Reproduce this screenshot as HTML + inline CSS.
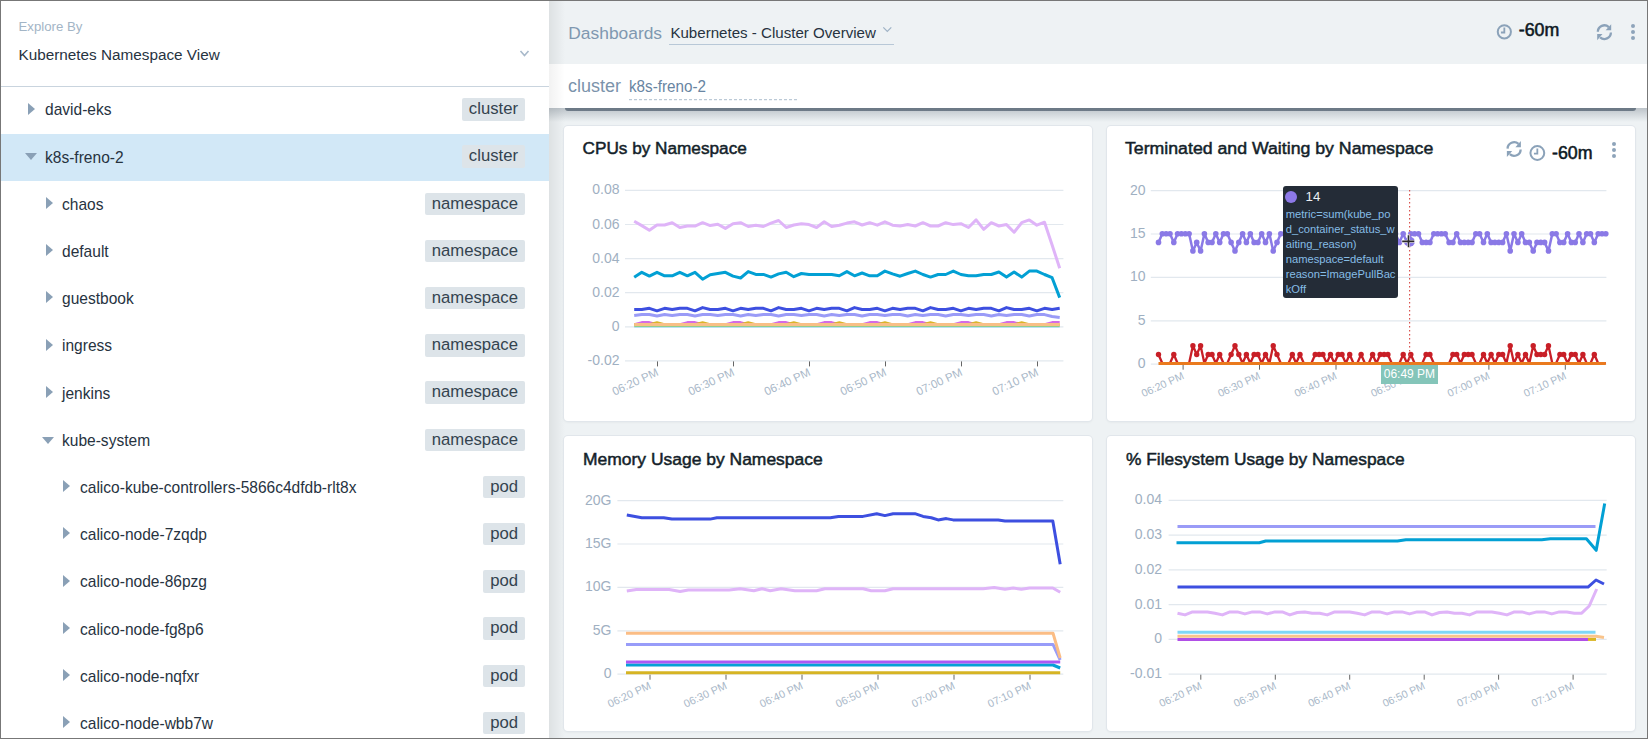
<!DOCTYPE html><html><head><meta charset="utf-8"><style>
*{box-sizing:border-box;margin:0;padding:0}
html,body{width:1648px;height:739px;overflow:hidden;background:#fff}
body{position:relative;font-family:"Liberation Sans", sans-serif;color:#2b3946}
.abs{position:absolute}
.frame{position:absolute;left:0;top:0;width:1648px;height:739px;border:1px solid #777;z-index:50;pointer-events:none}
.left{position:absolute;left:0;top:0;width:549px;height:739px;background:#fff}
.lbl{position:absolute;white-space:nowrap;line-height:1}
.row{position:absolute;left:0;width:549px;height:47.2px}
.row.sel{background:#d2e8f7}
.row .t{position:absolute;top:14.9px;font-size:16.2px;transform:scaleX(0.96);transform-origin:0 0;line-height:1;white-space:nowrap;color:#27333f}
.tag{position:absolute;right:24px;top:11.5px;height:22.6px;padding:0 7px;background:#dde4e9;border-radius:2px;font-size:16.7px;line-height:22.6px;color:#34434f}
.tri-r{position:absolute;width:0;height:0;border-top:6.8px solid transparent;border-bottom:6.8px solid transparent;border-left:7.3px solid #8aa0b6}
.tri-d{position:absolute;width:0;height:0;border-left:6.8px solid transparent;border-right:6.8px solid transparent;border-top:7.2px solid #8aa0b6}
.main{position:absolute;left:549px;top:0;width:1099px;height:739px;background:#eef2f4}
.card{position:absolute;background:#fff;border-radius:4px;box-shadow:0 0 0 1px #e1e6eb, 0 1px 3px rgba(0,0,0,.07)}
.ttl{position:absolute;left:18px;font-size:17.2px;font-weight:normal;-webkit-text-stroke:0.5px #141f2a;color:#141f2a;white-space:nowrap;line-height:1}
svg text{font-family:"Liberation Sans", sans-serif}
</style></head><body><div class="left">
<div class="lbl" style="left:18.5px;top:20.2px;font-size:13.2px;color:#a3b5c6">Explore By</div>
<div class="lbl" style="left:18.5px;top:47.4px;font-size:15.3px;color:#27333f">Kubernetes Namespace View</div>
<svg class="abs" style="left:519px;top:49px" width="12" height="9"><polyline points="1.5,2 5.5,6.5 9.5,2" fill="none" stroke="#a8b9ca" stroke-width="1.6"/></svg>
<div class="abs" style="left:1px;top:86px;width:548px;height:1px;background:#c9d4de"></div>
<div class="row" style="top:86.6px">
<div class="tri-r" style="left:28.0px;top:16.1px"></div>
<div class="t" style="left:44.6px">david-eks</div>
<div class="tag">cluster</div>
</div>
<div class="row sel" style="top:133.8px">
<div class="tri-d" style="left:24.8px;top:19.5px"></div>
<div class="t" style="left:44.6px">k8s-freno-2</div>
<div class="tag">cluster</div>
</div>
<div class="row" style="top:181.0px">
<div class="tri-r" style="left:45.6px;top:16.1px"></div>
<div class="t" style="left:62.2px">chaos</div>
<div class="tag">namespace</div>
</div>
<div class="row" style="top:228.2px">
<div class="tri-r" style="left:45.6px;top:16.1px"></div>
<div class="t" style="left:62.2px">default</div>
<div class="tag">namespace</div>
</div>
<div class="row" style="top:275.4px">
<div class="tri-r" style="left:45.6px;top:16.1px"></div>
<div class="t" style="left:62.2px">guestbook</div>
<div class="tag">namespace</div>
</div>
<div class="row" style="top:322.6px">
<div class="tri-r" style="left:45.6px;top:16.1px"></div>
<div class="t" style="left:62.2px">ingress</div>
<div class="tag">namespace</div>
</div>
<div class="row" style="top:369.8px">
<div class="tri-r" style="left:45.6px;top:16.1px"></div>
<div class="t" style="left:62.2px">jenkins</div>
<div class="tag">namespace</div>
</div>
<div class="row" style="top:417.0px">
<div class="tri-d" style="left:42.4px;top:19.5px"></div>
<div class="t" style="left:62.2px">kube-system</div>
<div class="tag">namespace</div>
</div>
<div class="row" style="top:464.2px">
<div class="tri-r" style="left:63.2px;top:16.1px"></div>
<div class="t" style="left:79.8px">calico-kube-controllers-5866c4dfdb-rlt8x</div>
<div class="tag">pod</div>
</div>
<div class="row" style="top:511.4px">
<div class="tri-r" style="left:63.2px;top:16.1px"></div>
<div class="t" style="left:79.8px">calico-node-7zqdp</div>
<div class="tag">pod</div>
</div>
<div class="row" style="top:558.6px">
<div class="tri-r" style="left:63.2px;top:16.1px"></div>
<div class="t" style="left:79.8px">calico-node-86pzg</div>
<div class="tag">pod</div>
</div>
<div class="row" style="top:605.8px">
<div class="tri-r" style="left:63.2px;top:16.1px"></div>
<div class="t" style="left:79.8px">calico-node-fg8p6</div>
<div class="tag">pod</div>
</div>
<div class="row" style="top:653.0px">
<div class="tri-r" style="left:63.2px;top:16.1px"></div>
<div class="t" style="left:79.8px">calico-node-nqfxr</div>
<div class="tag">pod</div>
</div>
<div class="row" style="top:700.2px">
<div class="tri-r" style="left:63.2px;top:16.1px"></div>
<div class="t" style="left:79.8px">calico-node-wbb7w</div>
<div class="tag">pod</div>
</div>
</div>
<div class="main">
<div class="abs" style="left:0;top:0;width:16px;height:739px;background:linear-gradient(to right,rgba(0,0,0,.07),rgba(0,0,0,0))"></div>
<div class="lbl" style="left:19.3px;top:25px;font-size:17.4px;color:#7f98b0">Dashboards</div>
<div class="lbl" style="left:121.4px;top:25.2px;font-size:15.1px;color:#27333f">Kubernetes - Cluster Overview</div>
<svg class="abs" style="left:333px;top:25px" width="11" height="9"><polyline points="1.3,2.3 5.3,6.5 9.3,2.3" fill="none" stroke="#9fb3c6" stroke-width="1.2"/></svg>
<div class="abs" style="left:120px;top:43.8px;width:225px;height:1.5px;background:#b8c8d7"></div>
<svg class="abs" style="left:945px;top:22px" width="22" height="22"><circle cx="10.34" cy="9.80" r="6.60" fill="none" stroke="#8ba2b9" stroke-width="2"/><polyline points="10.34,5.40 10.34,10.50 6.94,10.50" fill="none" stroke="#8ba2b9" stroke-width="1.8"/></svg>
<div class="lbl" style="left:969.8px;top:22.3px;font-size:17.8px;-webkit-text-stroke:0.55px #0d1823;color:#0d1823">-60m</div>
<svg class="abs" style="left:1045px;top:22px" width="20" height="20" viewBox="-0.47 -0.15 20 20"><path d="M3.35 9.6A6.55 6.55 0 0 1 14.3 4.9" fill="none" stroke="#8ba2b9" stroke-width="2.3"/><path d="M16.7 2.0V8.2H11.2Z" fill="#8ba2b9"/><path d="M16.45 10.4A6.55 6.55 0 0 1 5.6 15.2" fill="none" stroke="#8ba2b9" stroke-width="2.3"/><path d="M2.7 18.0V11.9H8.0Z" fill="#8ba2b9"/></svg>
<div class="abs" style="left:1081.7px;top:24.0px;width:4.4px;height:4.4px;border-radius:50%;background:#8ea4ba"></div><div class="abs" style="left:1081.7px;top:29.9px;width:4.4px;height:4.4px;border-radius:50%;background:#8ea4ba"></div><div class="abs" style="left:1081.7px;top:35.8px;width:4.4px;height:4.4px;border-radius:50%;background:#8ea4ba"></div>
<div class="abs" style="left:16px;top:108px;width:1071px;height:3px;background:#7d8995;border-radius:0 0 3px 3px"></div>
<div class="abs" style="left:0;top:108px;width:1099px;height:14px;background:linear-gradient(to bottom,rgba(60,75,90,.28),rgba(60,75,90,0))"></div>
<div class="abs" style="left:0;top:64px;width:1099px;height:44px;background:#fff"></div>
<div class="abs" style="left:0;top:64px;width:16px;height:44px;background:linear-gradient(to right,rgba(0,0,0,.05),rgba(0,0,0,0))"></div>
<div class="lbl" style="left:19px;top:77px;font-size:18px;color:#7b93ab">cluster</div>
<div class="lbl" style="left:79.6px;top:78.7px;font-size:15.8px;color:#6885a2;transform:scaleX(0.965);transform-origin:0 0">k8s-freno-2</div>
<svg class="abs" style="left:80px;top:98px" width="170" height="4"><line x1="0" y1="1.6" x2="168" y2="1.6" stroke="#bccad7" stroke-width="1.4" stroke-dasharray="3 2"/></svg>
</div>
<div class="card" style="left:564px;top:125.5px;width:528px;height:295.2px"></div>
<div class="card" style="left:1107.3px;top:125.5px;width:528.1000000000001px;height:295.2px"></div>
<div class="card" style="left:564px;top:435.7px;width:528px;height:295.3px"></div>
<div class="card" style="left:1107.3px;top:435.7px;width:528.1000000000001px;height:295.3px"></div>
<div class="ttl" style="left:582.5px;top:140.1px">CPUs by Namespace</div>
<div class="ttl" style="left:1125px;top:140.1px;transform:scaleX(1.03);transform-origin:0 0">Terminated and Waiting by Namespace</div>
<div class="ttl" style="left:582.6px;top:450.6px;transform:scaleX(1.016);transform-origin:0 0">Memory Usage by Namespace</div>
<div class="ttl" style="left:1126px;top:450.6px;transform:scaleX(1.009);transform-origin:0 0">% Filesystem Usage by Namespace</div>
<svg class="abs" style="left:0;top:0;z-index:5" width="1648" height="739"><line x1="625" y1="190.4" x2="1063.4" y2="190.4" stroke="#e2e8ee" stroke-width="1.2"/><text x="619.5" y="194.4" text-anchor="end" font-size="14" fill="#9fb0c2">0.08</text><line x1="625" y1="224.5" x2="1063.4" y2="224.5" stroke="#e2e8ee" stroke-width="1.2"/><text x="619.5" y="228.5" text-anchor="end" font-size="14" fill="#9fb0c2">0.06</text><line x1="625" y1="258.6" x2="1063.4" y2="258.6" stroke="#e2e8ee" stroke-width="1.2"/><text x="619.5" y="262.6" text-anchor="end" font-size="14" fill="#9fb0c2">0.04</text><line x1="625" y1="292.7" x2="1063.4" y2="292.7" stroke="#e2e8ee" stroke-width="1.2"/><text x="619.5" y="296.7" text-anchor="end" font-size="14" fill="#9fb0c2">0.02</text><line x1="625" y1="326.8" x2="1063.4" y2="326.8" stroke="#e2e8ee" stroke-width="1.2"/><text x="619.5" y="330.8" text-anchor="end" font-size="14" fill="#9fb0c2">0</text><line x1="625" y1="360.9" x2="1063.4" y2="360.9" stroke="#e2e8ee" stroke-width="1.2"/><text x="619.5" y="364.9" text-anchor="end" font-size="14" fill="#9fb0c2">-0.02</text><line x1="657.5" y1="361.4" x2="657.5" y2="366.4" stroke="#666" stroke-width="1"/><text transform="translate(659.1,374.9) rotate(-25)" text-anchor="end" font-size="11.5" fill="#a9b8c8">06:20 PM</text><line x1="733.5" y1="361.4" x2="733.5" y2="366.4" stroke="#666" stroke-width="1"/><text transform="translate(735.1,374.9) rotate(-25)" text-anchor="end" font-size="11.5" fill="#a9b8c8">06:30 PM</text><line x1="809.5" y1="361.4" x2="809.5" y2="366.4" stroke="#666" stroke-width="1"/><text transform="translate(811.1,374.9) rotate(-25)" text-anchor="end" font-size="11.5" fill="#a9b8c8">06:40 PM</text><line x1="885.5" y1="361.4" x2="885.5" y2="366.4" stroke="#666" stroke-width="1"/><text transform="translate(887.1,374.9) rotate(-25)" text-anchor="end" font-size="11.5" fill="#a9b8c8">06:50 PM</text><line x1="961.5" y1="361.4" x2="961.5" y2="366.4" stroke="#666" stroke-width="1"/><text transform="translate(963.1,374.9) rotate(-25)" text-anchor="end" font-size="11.5" fill="#a9b8c8">07:00 PM</text><line x1="1037.5" y1="361.4" x2="1037.5" y2="366.4" stroke="#666" stroke-width="1"/><text transform="translate(1039.1,374.9) rotate(-25)" text-anchor="end" font-size="11.5" fill="#a9b8c8">07:10 PM</text><polyline points="634.2,326.8 641.8,326.8 649.4,326.8 657,326.8 664.6,326.8 672.2,326.8 679.8,326.8 687.4,326.8 695,326.8 702.6,326.8 710.2,326.8 717.8,326.8 725.4,326.8 733,326.8 740.6,326.8 748.2,326.8 755.8,326.8 763.4,326.8 771,326.8 778.6,326.8 786.2,326.8 793.8,326.8 801.4,326.8 809,326.8 816.6,326.8 824.2,326.8 831.7,326.8 839.3,326.8 846.9,326.8 854.5,326.8 862.1,326.8 869.7,326.8 877.3,326.8 884.9,326.8 892.5,326.8 900.1,326.8 907.7,326.8 915.3,326.8 922.9,326.8 930.5,326.8 938.1,326.8 945.7,326.8 953.3,326.8 960.9,326.8 968.5,326.8 976.1,326.8 983.7,326.8 991.3,326.8 998.9,326.8 1006.5,326.8 1014.1,326.8 1021.7,326.8 1029.3,326.8 1036.9,326.8 1044.5,326.8 1052.1,326.8 1059.7,326.8" fill="none" stroke="#a8dbf5" stroke-width="2" stroke-linejoin="round" stroke-linecap="butt" /><polyline points="634.2,325.8 641.8,325.8 649.4,325.8 657,325.8 664.6,325.8 672.2,325.8 679.8,325.8 687.4,325.8 695,325.8 702.6,325.8 710.2,325.8 717.8,325.8 725.4,325.8 733,325.8 740.6,325.8 748.2,325.8 755.8,325.8 763.4,325.8 771,325.8 778.6,325.8 786.2,325.8 793.8,325.8 801.4,325.8 809,325.8 816.6,325.8 824.2,325.8 831.7,325.8 839.3,325.8 846.9,325.8 854.5,325.8 862.1,325.8 869.7,325.8 877.3,325.8 884.9,325.8 892.5,325.8 900.1,325.8 907.7,325.8 915.3,325.8 922.9,325.8 930.5,325.8 938.1,325.8 945.7,325.8 953.3,325.8 960.9,325.8 968.5,325.8 976.1,325.8 983.7,325.8 991.3,325.8 998.9,325.8 1006.5,325.8 1014.1,325.8 1021.7,325.8 1029.3,325.8 1036.9,325.8 1044.5,325.8 1052.1,325.8 1059.7,325.8" fill="none" stroke="#8cc96a" stroke-width="2" stroke-linejoin="round" stroke-linecap="butt" /><polyline points="634.2,324.3 641.8,322.1 649.4,322.1 657,324.3 664.6,324.3 672.2,324.3 679.8,324.3 687.4,322.1 695,322.1 702.6,324.3 710.2,324.3 717.8,324.3 725.4,324.3 733,322.1 740.6,322.1 748.2,324.3 755.8,324.3 763.4,324.3 771,324.3 778.6,322.1 786.2,322.1 793.8,324.3 801.4,324.3 809,324.3 816.6,324.3 824.2,322.1 831.7,322.1 839.3,324.3 846.9,324.3 854.5,324.3 862.1,324.3 869.7,322.1 877.3,322.1 884.9,324.3 892.5,324.3 900.1,324.3 907.7,324.3 915.3,322.1 922.9,322.1 930.5,324.3 938.1,324.3 945.7,324.3 953.3,324.3 960.9,322.1 968.5,322.1 976.1,324.3 983.7,324.3 991.3,324.3 998.9,324.3 1006.5,322.1 1014.1,322.1 1021.7,324.3 1029.3,324.3 1036.9,324.3 1044.5,324.3 1052.1,322.1 1059.7,322.1" fill="none" stroke="#d36be6" stroke-width="2" stroke-linejoin="round" stroke-linecap="butt" /><polyline points="634.2,324.3 641.8,324.3 649.4,324.3 657,322.3 664.6,324.3 672.2,324.3 679.8,324.3 687.4,324.3 695,324.3 702.6,322.3 710.2,324.3 717.8,324.3 725.4,324.3 733,324.3 740.6,324.3 748.2,322.3 755.8,324.3 763.4,324.3 771,324.3 778.6,324.3 786.2,324.3 793.8,322.3 801.4,324.3 809,324.3 816.6,324.3 824.2,324.3 831.7,324.3 839.3,322.3 846.9,324.3 854.5,324.3 862.1,324.3 869.7,324.3 877.3,324.3 884.9,322.3 892.5,324.3 900.1,324.3 907.7,324.3 915.3,324.3 922.9,324.3 930.5,322.3 938.1,324.3 945.7,324.3 953.3,324.3 960.9,324.3 968.5,324.3 976.1,322.3 983.7,324.3 991.3,324.3 998.9,324.3 1006.5,324.3 1014.1,324.3 1021.7,322.3 1029.3,324.3 1036.9,324.3 1044.5,324.3 1052.1,324.3 1059.7,324.3" fill="none" stroke="#dbb52a" stroke-width="2" stroke-linejoin="round" stroke-linecap="butt" /><polyline points="634.2,324.4 641.8,324.4 649.4,324.4 657,324.4 664.6,324.4 672.2,324.4 679.8,324.4 687.4,324.4 695,324.4 702.6,324.4 710.2,324.4 717.8,324.4 725.4,324.4 733,324.4 740.6,324.4 748.2,324.4 755.8,324.4 763.4,324.4 771,324.4 778.6,324.4 786.2,324.4 793.8,324.4 801.4,324.4 809,324.4 816.6,324.4 824.2,324.4 831.7,324.4 839.3,324.4 846.9,324.4 854.5,324.4 862.1,324.4 869.7,324.4 877.3,324.4 884.9,324.4 892.5,324.4 900.1,324.4 907.7,324.4 915.3,324.4 922.9,324.4 930.5,324.4 938.1,324.4 945.7,324.4 953.3,324.4 960.9,324.4 968.5,324.4 976.1,324.4 983.7,324.4 991.3,324.4 998.9,324.4 1006.5,324.4 1014.1,324.4 1021.7,324.4 1029.3,324.4 1036.9,324.4 1044.5,324.4 1052.1,324.4 1059.7,324.4" fill="none" stroke="#f8bf86" stroke-width="3" stroke-linejoin="round" stroke-linecap="butt" /><polyline points="634.2,315.5 641.8,314.6 649.4,314.6 657,315.9 664.6,314.6 672.2,315.5 679.8,314.6 687.4,314.6 695,315.9 702.6,314.6 710.2,314.6 717.8,315.5 725.4,314.6 733,314.6 740.6,315.9 748.2,314.6 755.8,315.5 763.4,314.6 771,314.6 778.6,315.9 786.2,314.6 793.8,314.6 801.4,315.5 809,314.6 816.6,314.6 824.2,315.9 831.7,314.6 839.3,315.5 846.9,314.6 854.5,314.6 862.1,315.9 869.7,314.6 877.3,314.6 884.9,315.5 892.5,314.6 900.1,314.6 907.7,315.9 915.3,314.6 922.9,315.5 930.5,314.6 938.1,314.6 945.7,315.9 953.3,314.6 960.9,314.6 968.5,315.5 976.1,314.6 983.7,314.6 991.3,315.9 998.9,314.6 1006.5,315.5 1014.1,314.6 1021.7,314.6 1029.3,315.9 1036.9,314.6 1044.5,314.6 1052.1,316.5 1059.7,317.5" fill="none" stroke="#9a9bf7" stroke-width="3" stroke-linejoin="round" stroke-linecap="butt" /><polyline points="634.2,309.5 641.8,309.5 649.4,308.3 657,310.8 664.6,308.3 672.2,309.5 679.8,308.3 687.4,308.3 695,310.8 702.6,307.6 710.2,309.5 717.8,309.5 725.4,308.3 733,310.8 740.6,308.3 748.2,309.5 755.8,308.3 763.4,308.3 771,310.8 778.6,307.6 786.2,309.5 793.8,309.5 801.4,308.3 809,310.8 816.6,308.3 824.2,309.5 831.7,308.3 839.3,308.3 846.9,310.8 854.5,307.6 862.1,309.5 869.7,309.5 877.3,308.3 884.9,310.8 892.5,308.3 900.1,309.5 907.7,308.3 915.3,308.3 922.9,310.8 930.5,307.6 938.1,309.5 945.7,309.5 953.3,308.3 960.9,310.8 968.5,308.3 976.1,309.5 983.7,308.3 991.3,308.3 998.9,310.8 1006.5,307.6 1014.1,309.5 1021.7,309.5 1029.3,308.3 1036.9,310.8 1044.5,308.3 1052.1,309.5 1059.7,308.3" fill="none" stroke="#3d4fe0" stroke-width="3" stroke-linejoin="round" stroke-linecap="butt" /><polyline points="634.2,277.3 641.8,272.3 649.4,276.1 657,272.3 664.6,275.8 672.2,275.8 679.8,272.3 687.4,275.8 695,272.3 702.6,279.2 710.2,274.8 717.8,273.5 725.4,272.3 733,276.1 740.6,278 748.2,271.6 755.8,274.4 763.4,274.4 771,277.1 778.6,273.9 786.2,272.3 793.8,276.7 801.4,273.5 809,274.4 816.6,274.4 824.2,274.4 831.7,274.4 839.3,275.8 846.9,271.6 854.5,275.8 862.1,273 869.7,275.8 877.3,275.8 884.9,271.1 892.5,273.9 900.1,276.2 907.7,273.5 915.3,271.1 922.9,274.5 930.5,277.1 938.1,274.5 945.7,274.5 953.3,271.1 960.9,274.5 968.5,275.8 976.1,275.8 983.7,274.5 991.3,274.5 998.9,272 1006.5,277.1 1014.1,272 1021.7,277.1 1029.3,271.1 1036.9,271.1 1044.5,274.5 1052.1,277.7 1059.7,297.6" fill="none" stroke="#02a0d4" stroke-width="3" stroke-linejoin="round" stroke-linecap="butt" /><polyline points="634.2,221.2 641.8,225.6 649.4,230.3 657,225 664.6,225 672.2,222.7 679.8,227.5 687.4,226.1 695,226.1 702.6,222.7 710.2,225.6 717.8,224.2 725.4,228.4 733,223.7 740.6,222.7 748.2,226.5 755.8,225.2 763.4,226.5 771,223.1 778.6,220.5 786.2,227.5 793.8,225 801.4,223.7 809,224.6 816.6,227.5 824.2,221.8 831.7,226.5 839.3,225.2 846.9,223.1 854.5,221.8 862.1,225 869.7,222.7 877.3,225.2 884.9,221.8 892.5,225.2 900.1,226 907.7,224.6 915.3,226 922.9,222.7 930.5,226 938.1,226 945.7,222.7 953.3,224.6 960.9,223.7 968.5,227.5 976.1,219.9 983.7,229.4 991.3,222.7 998.9,226 1006.5,224.6 1014.1,232.2 1021.7,222.7 1029.3,219.9 1036.9,225.2 1044.5,222.2 1052.1,245 1059.7,268.2" fill="none" stroke="#dfb4f8" stroke-width="3" stroke-linejoin="round" stroke-linecap="butt" /><line x1="1150.8" y1="190.6" x2="1606.4" y2="190.6" stroke="#e2e8ee" stroke-width="1.2"/><text x="1145.5" y="194.6" text-anchor="end" font-size="14" fill="#9fb0c2">20</text><line x1="1150.8" y1="234.0" x2="1606.4" y2="234.0" stroke="#e2e8ee" stroke-width="1.2"/><text x="1145.5" y="238.0" text-anchor="end" font-size="14" fill="#9fb0c2">15</text><line x1="1150.8" y1="277.4" x2="1606.4" y2="277.4" stroke="#e2e8ee" stroke-width="1.2"/><text x="1145.5" y="281.4" text-anchor="end" font-size="14" fill="#9fb0c2">10</text><line x1="1150.8" y1="320.8" x2="1606.4" y2="320.8" stroke="#e2e8ee" stroke-width="1.2"/><text x="1145.5" y="324.8" text-anchor="end" font-size="14" fill="#9fb0c2">5</text><line x1="1150.8" y1="364.2" x2="1606.4" y2="364.2" stroke="#e2e8ee" stroke-width="1.2"/><text x="1145.5" y="368.2" text-anchor="end" font-size="14" fill="#9fb0c2">0</text><line x1="1183.1" y1="364.7" x2="1183.1" y2="369.7" stroke="#666" stroke-width="1"/><text transform="translate(1184.7,378.2) rotate(-25)" text-anchor="end" font-size="10.6" fill="#a9b8c8">06:20 PM</text><line x1="1259.5" y1="364.7" x2="1259.5" y2="369.7" stroke="#666" stroke-width="1"/><text transform="translate(1261.1,378.2) rotate(-25)" text-anchor="end" font-size="10.6" fill="#a9b8c8">06:30 PM</text><line x1="1336.0" y1="364.7" x2="1336.0" y2="369.7" stroke="#666" stroke-width="1"/><text transform="translate(1337.6,378.2) rotate(-25)" text-anchor="end" font-size="10.6" fill="#a9b8c8">06:40 PM</text><line x1="1412.4" y1="364.7" x2="1412.4" y2="369.7" stroke="#666" stroke-width="1"/><text transform="translate(1414.0,378.2) rotate(-25)" text-anchor="end" font-size="10.6" fill="#a9b8c8">06:50 PM</text><line x1="1488.9" y1="364.7" x2="1488.9" y2="369.7" stroke="#666" stroke-width="1"/><text transform="translate(1490.5,378.2) rotate(-25)" text-anchor="end" font-size="10.6" fill="#a9b8c8">07:00 PM</text><line x1="1565.3" y1="364.7" x2="1565.3" y2="369.7" stroke="#666" stroke-width="1"/><text transform="translate(1566.9,378.2) rotate(-25)" text-anchor="end" font-size="10.6" fill="#a9b8c8">07:10 PM</text><polyline points="1158.5,242.4 1162.3,233.8 1166.1,233.8 1170,233.8 1173.8,242.4 1177.6,233.8 1181.4,233.8 1185.3,233.8 1189.1,233.8 1192.9,250.9 1196.7,242.4 1200.6,250.9 1204.4,233.8 1208.2,242.4 1212,242.4 1215.8,233.8 1219.7,242.4 1223.5,233.8 1227.3,233.8 1231.1,242.4 1235,250.9 1238.8,242.4 1242.6,233.8 1246.4,242.4 1250.3,233.8 1254.1,242.4 1257.9,242.4 1261.7,233.8 1265.5,242.4 1269.4,233.8 1273.2,250.9 1277,242.4 1280.8,233.8 1284.7,233.8 1288.5,242.4 1292.3,242.4 1296.1,233.8 1300,233.8 1303.8,242.4 1307.6,242.4 1311.4,242.4 1315.2,242.4 1319.1,233.8 1322.9,233.8 1326.7,233.8 1330.5,242.4 1334.4,233.8 1338.2,242.4 1342,233.8 1345.8,233.8 1349.7,233.8 1353.5,250.9 1357.3,242.4 1361.1,242.4 1364.9,242.4 1368.8,233.8 1372.6,233.8 1376.4,233.8 1380.2,233.8 1384.1,250.9 1387.9,233.8 1391.7,233.8 1395.5,233.8 1399.4,242.4 1403.2,233.8 1407,242.4 1410.8,233.8 1414.6,233.8 1418.5,233.8 1422.3,242.4 1426.1,242.4 1429.9,242.4 1433.8,233.8 1437.6,233.8 1441.4,233.8 1445.2,233.8 1449.1,242.4 1452.9,242.4 1456.7,233.8 1460.5,242.4 1464.3,242.4 1468.2,242.4 1472,242.4 1475.8,233.8 1479.6,233.8 1483.5,242.4 1487.3,233.8 1491.1,242.4 1494.9,242.4 1498.8,242.4 1502.6,242.4 1506.4,233.8 1510.2,250.9 1514,233.8 1517.9,242.4 1521.7,233.8 1525.5,242.4 1529.3,242.4 1533.2,250.9 1537,242.4 1540.8,242.4 1544.6,242.4 1548.5,250.9 1552.3,233.8 1556.1,233.8 1559.9,242.4 1563.7,242.4 1567.6,233.8 1571.4,242.4 1575.2,242.4 1579,233.8 1582.9,242.4 1586.7,233.8 1590.5,233.8 1594.3,242.4 1598.2,233.8 1602,233.8 1605.8,233.8" fill="none" stroke="#8a79e6" stroke-width="2.5" stroke-linejoin="round" stroke-linecap="butt" /><circle cx="1158.5" cy="242.4" r="2.8" fill="#8a79e6"/><circle cx="1162.3" cy="233.8" r="2.8" fill="#8a79e6"/><circle cx="1166.1" cy="233.8" r="2.8" fill="#8a79e6"/><circle cx="1170.0" cy="233.8" r="2.8" fill="#8a79e6"/><circle cx="1173.8" cy="242.4" r="2.8" fill="#8a79e6"/><circle cx="1177.6" cy="233.8" r="2.8" fill="#8a79e6"/><circle cx="1181.4" cy="233.8" r="2.8" fill="#8a79e6"/><circle cx="1185.3" cy="233.8" r="2.8" fill="#8a79e6"/><circle cx="1189.1" cy="233.8" r="2.8" fill="#8a79e6"/><circle cx="1192.9" cy="250.9" r="2.8" fill="#8a79e6"/><circle cx="1196.7" cy="242.4" r="2.8" fill="#8a79e6"/><circle cx="1200.6" cy="250.9" r="2.8" fill="#8a79e6"/><circle cx="1204.4" cy="233.8" r="2.8" fill="#8a79e6"/><circle cx="1208.2" cy="242.4" r="2.8" fill="#8a79e6"/><circle cx="1212.0" cy="242.4" r="2.8" fill="#8a79e6"/><circle cx="1215.8" cy="233.8" r="2.8" fill="#8a79e6"/><circle cx="1219.7" cy="242.4" r="2.8" fill="#8a79e6"/><circle cx="1223.5" cy="233.8" r="2.8" fill="#8a79e6"/><circle cx="1227.3" cy="233.8" r="2.8" fill="#8a79e6"/><circle cx="1231.1" cy="242.4" r="2.8" fill="#8a79e6"/><circle cx="1235.0" cy="250.9" r="2.8" fill="#8a79e6"/><circle cx="1238.8" cy="242.4" r="2.8" fill="#8a79e6"/><circle cx="1242.6" cy="233.8" r="2.8" fill="#8a79e6"/><circle cx="1246.4" cy="242.4" r="2.8" fill="#8a79e6"/><circle cx="1250.3" cy="233.8" r="2.8" fill="#8a79e6"/><circle cx="1254.1" cy="242.4" r="2.8" fill="#8a79e6"/><circle cx="1257.9" cy="242.4" r="2.8" fill="#8a79e6"/><circle cx="1261.7" cy="233.8" r="2.8" fill="#8a79e6"/><circle cx="1265.5" cy="242.4" r="2.8" fill="#8a79e6"/><circle cx="1269.4" cy="233.8" r="2.8" fill="#8a79e6"/><circle cx="1273.2" cy="250.9" r="2.8" fill="#8a79e6"/><circle cx="1277.0" cy="242.4" r="2.8" fill="#8a79e6"/><circle cx="1280.8" cy="233.8" r="2.8" fill="#8a79e6"/><circle cx="1284.7" cy="233.8" r="2.8" fill="#8a79e6"/><circle cx="1288.5" cy="242.4" r="2.8" fill="#8a79e6"/><circle cx="1292.3" cy="242.4" r="2.8" fill="#8a79e6"/><circle cx="1296.1" cy="233.8" r="2.8" fill="#8a79e6"/><circle cx="1300.0" cy="233.8" r="2.8" fill="#8a79e6"/><circle cx="1303.8" cy="242.4" r="2.8" fill="#8a79e6"/><circle cx="1307.6" cy="242.4" r="2.8" fill="#8a79e6"/><circle cx="1311.4" cy="242.4" r="2.8" fill="#8a79e6"/><circle cx="1315.2" cy="242.4" r="2.8" fill="#8a79e6"/><circle cx="1319.1" cy="233.8" r="2.8" fill="#8a79e6"/><circle cx="1322.9" cy="233.8" r="2.8" fill="#8a79e6"/><circle cx="1326.7" cy="233.8" r="2.8" fill="#8a79e6"/><circle cx="1330.5" cy="242.4" r="2.8" fill="#8a79e6"/><circle cx="1334.4" cy="233.8" r="2.8" fill="#8a79e6"/><circle cx="1338.2" cy="242.4" r="2.8" fill="#8a79e6"/><circle cx="1342.0" cy="233.8" r="2.8" fill="#8a79e6"/><circle cx="1345.8" cy="233.8" r="2.8" fill="#8a79e6"/><circle cx="1349.7" cy="233.8" r="2.8" fill="#8a79e6"/><circle cx="1353.5" cy="250.9" r="2.8" fill="#8a79e6"/><circle cx="1357.3" cy="242.4" r="2.8" fill="#8a79e6"/><circle cx="1361.1" cy="242.4" r="2.8" fill="#8a79e6"/><circle cx="1364.9" cy="242.4" r="2.8" fill="#8a79e6"/><circle cx="1368.8" cy="233.8" r="2.8" fill="#8a79e6"/><circle cx="1372.6" cy="233.8" r="2.8" fill="#8a79e6"/><circle cx="1376.4" cy="233.8" r="2.8" fill="#8a79e6"/><circle cx="1380.2" cy="233.8" r="2.8" fill="#8a79e6"/><circle cx="1384.1" cy="250.9" r="2.8" fill="#8a79e6"/><circle cx="1387.9" cy="233.8" r="2.8" fill="#8a79e6"/><circle cx="1391.7" cy="233.8" r="2.8" fill="#8a79e6"/><circle cx="1395.5" cy="233.8" r="2.8" fill="#8a79e6"/><circle cx="1399.4" cy="242.4" r="2.8" fill="#8a79e6"/><circle cx="1403.2" cy="233.8" r="2.8" fill="#8a79e6"/><circle cx="1407.0" cy="242.4" r="2.8" fill="#8a79e6"/><circle cx="1410.8" cy="233.8" r="2.8" fill="#8a79e6"/><circle cx="1414.6" cy="233.8" r="2.8" fill="#8a79e6"/><circle cx="1418.5" cy="233.8" r="2.8" fill="#8a79e6"/><circle cx="1422.3" cy="242.4" r="2.8" fill="#8a79e6"/><circle cx="1426.1" cy="242.4" r="2.8" fill="#8a79e6"/><circle cx="1429.9" cy="242.4" r="2.8" fill="#8a79e6"/><circle cx="1433.8" cy="233.8" r="2.8" fill="#8a79e6"/><circle cx="1437.6" cy="233.8" r="2.8" fill="#8a79e6"/><circle cx="1441.4" cy="233.8" r="2.8" fill="#8a79e6"/><circle cx="1445.2" cy="233.8" r="2.8" fill="#8a79e6"/><circle cx="1449.1" cy="242.4" r="2.8" fill="#8a79e6"/><circle cx="1452.9" cy="242.4" r="2.8" fill="#8a79e6"/><circle cx="1456.7" cy="233.8" r="2.8" fill="#8a79e6"/><circle cx="1460.5" cy="242.4" r="2.8" fill="#8a79e6"/><circle cx="1464.3" cy="242.4" r="2.8" fill="#8a79e6"/><circle cx="1468.2" cy="242.4" r="2.8" fill="#8a79e6"/><circle cx="1472.0" cy="242.4" r="2.8" fill="#8a79e6"/><circle cx="1475.8" cy="233.8" r="2.8" fill="#8a79e6"/><circle cx="1479.6" cy="233.8" r="2.8" fill="#8a79e6"/><circle cx="1483.5" cy="242.4" r="2.8" fill="#8a79e6"/><circle cx="1487.3" cy="233.8" r="2.8" fill="#8a79e6"/><circle cx="1491.1" cy="242.4" r="2.8" fill="#8a79e6"/><circle cx="1494.9" cy="242.4" r="2.8" fill="#8a79e6"/><circle cx="1498.8" cy="242.4" r="2.8" fill="#8a79e6"/><circle cx="1502.6" cy="242.4" r="2.8" fill="#8a79e6"/><circle cx="1506.4" cy="233.8" r="2.8" fill="#8a79e6"/><circle cx="1510.2" cy="250.9" r="2.8" fill="#8a79e6"/><circle cx="1514.0" cy="233.8" r="2.8" fill="#8a79e6"/><circle cx="1517.9" cy="242.4" r="2.8" fill="#8a79e6"/><circle cx="1521.7" cy="233.8" r="2.8" fill="#8a79e6"/><circle cx="1525.5" cy="242.4" r="2.8" fill="#8a79e6"/><circle cx="1529.3" cy="242.4" r="2.8" fill="#8a79e6"/><circle cx="1533.2" cy="250.9" r="2.8" fill="#8a79e6"/><circle cx="1537.0" cy="242.4" r="2.8" fill="#8a79e6"/><circle cx="1540.8" cy="242.4" r="2.8" fill="#8a79e6"/><circle cx="1544.6" cy="242.4" r="2.8" fill="#8a79e6"/><circle cx="1548.5" cy="250.9" r="2.8" fill="#8a79e6"/><circle cx="1552.3" cy="233.8" r="2.8" fill="#8a79e6"/><circle cx="1556.1" cy="233.8" r="2.8" fill="#8a79e6"/><circle cx="1559.9" cy="242.4" r="2.8" fill="#8a79e6"/><circle cx="1563.7" cy="242.4" r="2.8" fill="#8a79e6"/><circle cx="1567.6" cy="233.8" r="2.8" fill="#8a79e6"/><circle cx="1571.4" cy="242.4" r="2.8" fill="#8a79e6"/><circle cx="1575.2" cy="242.4" r="2.8" fill="#8a79e6"/><circle cx="1579.0" cy="233.8" r="2.8" fill="#8a79e6"/><circle cx="1582.9" cy="242.4" r="2.8" fill="#8a79e6"/><circle cx="1586.7" cy="233.8" r="2.8" fill="#8a79e6"/><circle cx="1590.5" cy="233.8" r="2.8" fill="#8a79e6"/><circle cx="1594.3" cy="242.4" r="2.8" fill="#8a79e6"/><circle cx="1598.2" cy="233.8" r="2.8" fill="#8a79e6"/><circle cx="1602.0" cy="233.8" r="2.8" fill="#8a79e6"/><circle cx="1605.8" cy="233.8" r="2.8" fill="#8a79e6"/><polyline points="1158.5,354.5 1162.3,363.2 1166.1,363.2 1170,363.2 1173.8,354.5 1177.6,363.2 1181.4,363.2 1185.3,363.2 1189.1,363.2 1192.9,345.8 1196.7,354.5 1200.6,345.8 1204.4,363.2 1208.2,354.5 1212,354.5 1215.8,363.2 1219.7,354.5 1223.5,363.2 1227.3,363.2 1231.1,354.5 1235,345.8 1238.8,354.5 1242.6,363.2 1246.4,354.5 1250.3,363.2 1254.1,354.5 1257.9,354.5 1261.7,363.2 1265.5,354.5 1269.4,363.2 1273.2,345.8 1277,354.5 1280.8,363.2 1284.7,363.2 1288.5,363.2 1292.3,354.5 1296.1,363.2 1300,354.5 1303.8,363.2 1307.6,363.2 1311.4,363.2 1315.2,354.5 1319.1,354.5 1322.9,354.5 1326.7,363.2 1330.5,354.5 1334.4,363.2 1338.2,354.5 1342,354.5 1345.8,363.2 1349.7,354.5 1353.5,363.2 1357.3,363.2 1361.1,354.5 1364.9,363.2 1368.8,363.2 1372.6,354.5 1376.4,363.2 1380.2,354.5 1384.1,354.5 1387.9,354.5 1391.7,363.2 1395.5,363.2 1399.4,363.2 1403.2,354.5 1407,363.2 1410.8,354.5 1414.6,363.2 1418.5,363.2 1422.3,363.2 1426.1,354.5 1429.9,354.5 1433.8,363.2 1437.6,363.2 1441.4,363.2 1445.2,363.2 1449.1,363.2 1452.9,354.5 1456.7,354.5 1460.5,363.2 1464.3,354.5 1468.2,354.5 1472,354.5 1475.8,363.2 1479.6,363.2 1483.5,354.5 1487.3,363.2 1491.1,354.5 1494.9,363.2 1498.8,354.5 1502.6,354.5 1506.4,363.2 1510.2,345.8 1514,363.2 1517.9,354.5 1521.7,363.2 1525.5,354.5 1529.3,363.2 1533.2,345.8 1537,354.5 1540.8,354.5 1544.6,354.5 1548.5,345.8 1552.3,363.2 1556.1,363.2 1559.9,354.5 1563.7,354.5 1567.6,363.2 1571.4,354.5 1575.2,354.5 1579,363.2 1582.9,354.5 1586.7,363.2 1590.5,363.2 1594.3,354.5 1598.2,363.2 1602,363.2 1605.8,363.2" fill="none" stroke="#c81f27" stroke-width="2.3" stroke-linejoin="round" stroke-linecap="butt" /><circle cx="1158.5" cy="354.5" r="2.7" fill="#c81f27"/><circle cx="1173.8" cy="354.5" r="2.7" fill="#c81f27"/><circle cx="1192.9" cy="345.8" r="2.7" fill="#c81f27"/><circle cx="1196.7" cy="354.5" r="2.7" fill="#c81f27"/><circle cx="1200.6" cy="345.8" r="2.7" fill="#c81f27"/><circle cx="1208.2" cy="354.5" r="2.7" fill="#c81f27"/><circle cx="1212.0" cy="354.5" r="2.7" fill="#c81f27"/><circle cx="1219.7" cy="354.5" r="2.7" fill="#c81f27"/><circle cx="1231.1" cy="354.5" r="2.7" fill="#c81f27"/><circle cx="1235.0" cy="345.8" r="2.7" fill="#c81f27"/><circle cx="1238.8" cy="354.5" r="2.7" fill="#c81f27"/><circle cx="1246.4" cy="354.5" r="2.7" fill="#c81f27"/><circle cx="1254.1" cy="354.5" r="2.7" fill="#c81f27"/><circle cx="1257.9" cy="354.5" r="2.7" fill="#c81f27"/><circle cx="1265.5" cy="354.5" r="2.7" fill="#c81f27"/><circle cx="1273.2" cy="345.8" r="2.7" fill="#c81f27"/><circle cx="1277.0" cy="354.5" r="2.7" fill="#c81f27"/><circle cx="1292.3" cy="354.5" r="2.7" fill="#c81f27"/><circle cx="1300.0" cy="354.5" r="2.7" fill="#c81f27"/><circle cx="1315.2" cy="354.5" r="2.7" fill="#c81f27"/><circle cx="1319.1" cy="354.5" r="2.7" fill="#c81f27"/><circle cx="1322.9" cy="354.5" r="2.7" fill="#c81f27"/><circle cx="1330.5" cy="354.5" r="2.7" fill="#c81f27"/><circle cx="1338.2" cy="354.5" r="2.7" fill="#c81f27"/><circle cx="1342.0" cy="354.5" r="2.7" fill="#c81f27"/><circle cx="1349.7" cy="354.5" r="2.7" fill="#c81f27"/><circle cx="1361.1" cy="354.5" r="2.7" fill="#c81f27"/><circle cx="1372.6" cy="354.5" r="2.7" fill="#c81f27"/><circle cx="1380.2" cy="354.5" r="2.7" fill="#c81f27"/><circle cx="1384.1" cy="354.5" r="2.7" fill="#c81f27"/><circle cx="1387.9" cy="354.5" r="2.7" fill="#c81f27"/><circle cx="1403.2" cy="354.5" r="2.7" fill="#c81f27"/><circle cx="1410.8" cy="354.5" r="2.7" fill="#c81f27"/><circle cx="1426.1" cy="354.5" r="2.7" fill="#c81f27"/><circle cx="1429.9" cy="354.5" r="2.7" fill="#c81f27"/><circle cx="1452.9" cy="354.5" r="2.7" fill="#c81f27"/><circle cx="1456.7" cy="354.5" r="2.7" fill="#c81f27"/><circle cx="1464.3" cy="354.5" r="2.7" fill="#c81f27"/><circle cx="1468.2" cy="354.5" r="2.7" fill="#c81f27"/><circle cx="1472.0" cy="354.5" r="2.7" fill="#c81f27"/><circle cx="1483.5" cy="354.5" r="2.7" fill="#c81f27"/><circle cx="1491.1" cy="354.5" r="2.7" fill="#c81f27"/><circle cx="1498.8" cy="354.5" r="2.7" fill="#c81f27"/><circle cx="1502.6" cy="354.5" r="2.7" fill="#c81f27"/><circle cx="1510.2" cy="345.8" r="2.7" fill="#c81f27"/><circle cx="1517.9" cy="354.5" r="2.7" fill="#c81f27"/><circle cx="1525.5" cy="354.5" r="2.7" fill="#c81f27"/><circle cx="1533.2" cy="345.8" r="2.7" fill="#c81f27"/><circle cx="1537.0" cy="354.5" r="2.7" fill="#c81f27"/><circle cx="1540.8" cy="354.5" r="2.7" fill="#c81f27"/><circle cx="1544.6" cy="354.5" r="2.7" fill="#c81f27"/><circle cx="1548.5" cy="345.8" r="2.7" fill="#c81f27"/><circle cx="1559.9" cy="354.5" r="2.7" fill="#c81f27"/><circle cx="1563.7" cy="354.5" r="2.7" fill="#c81f27"/><circle cx="1571.4" cy="354.5" r="2.7" fill="#c81f27"/><circle cx="1575.2" cy="354.5" r="2.7" fill="#c81f27"/><circle cx="1582.9" cy="354.5" r="2.7" fill="#c81f27"/><circle cx="1594.3" cy="354.5" r="2.7" fill="#c81f27"/><line x1="1158.5" y1="363.4" x2="1605.8" y2="363.4" stroke="#ea7a1e" stroke-width="3"/><line x1="1409.6" y1="190" x2="1409.6" y2="365" stroke="#d9534f" stroke-width="1.2" stroke-dasharray="1.6 2.4"/><circle cx="1409.8" cy="241.8" r="5" fill="#8a79e6"/><line x1="617.4" y1="500.6" x2="1063.3" y2="500.6" stroke="#e2e8ee" stroke-width="1.2"/><text x="611.5" y="504.6" text-anchor="end" font-size="14" fill="#9fb0c2">20G</text><line x1="617.4" y1="544.0" x2="1063.3" y2="544.0" stroke="#e2e8ee" stroke-width="1.2"/><text x="611.5" y="548.0" text-anchor="end" font-size="14" fill="#9fb0c2">15G</text><line x1="617.4" y1="587.4" x2="1063.3" y2="587.4" stroke="#e2e8ee" stroke-width="1.2"/><text x="611.5" y="591.4" text-anchor="end" font-size="14" fill="#9fb0c2">10G</text><line x1="617.4" y1="630.8" x2="1063.3" y2="630.8" stroke="#e2e8ee" stroke-width="1.2"/><text x="611.5" y="634.8" text-anchor="end" font-size="14" fill="#9fb0c2">5G</text><line x1="617.4" y1="674.2" x2="1063.3" y2="674.2" stroke="#e2e8ee" stroke-width="1.2"/><text x="611.5" y="678.2" text-anchor="end" font-size="14" fill="#9fb0c2">0</text><line x1="650.0" y1="674.7" x2="650.0" y2="679.7" stroke="#666" stroke-width="1"/><text transform="translate(651.6,688.2) rotate(-25)" text-anchor="end" font-size="10.8" fill="#a9b8c8">06:20 PM</text><line x1="726.0" y1="674.7" x2="726.0" y2="679.7" stroke="#666" stroke-width="1"/><text transform="translate(727.6,688.2) rotate(-25)" text-anchor="end" font-size="10.8" fill="#a9b8c8">06:30 PM</text><line x1="802.0" y1="674.7" x2="802.0" y2="679.7" stroke="#666" stroke-width="1"/><text transform="translate(803.6,688.2) rotate(-25)" text-anchor="end" font-size="10.8" fill="#a9b8c8">06:40 PM</text><line x1="878.0" y1="674.7" x2="878.0" y2="679.7" stroke="#666" stroke-width="1"/><text transform="translate(879.6,688.2) rotate(-25)" text-anchor="end" font-size="10.8" fill="#a9b8c8">06:50 PM</text><line x1="954.0" y1="674.7" x2="954.0" y2="679.7" stroke="#666" stroke-width="1"/><text transform="translate(955.6,688.2) rotate(-25)" text-anchor="end" font-size="10.8" fill="#a9b8c8">07:00 PM</text><line x1="1030.0" y1="674.7" x2="1030.0" y2="679.7" stroke="#666" stroke-width="1"/><text transform="translate(1031.6,688.2) rotate(-25)" text-anchor="end" font-size="10.8" fill="#a9b8c8">07:10 PM</text><polyline points="626,672.8 1060.2,672.8" fill="none" stroke="#d6b423" stroke-width="3" stroke-linejoin="round" stroke-linecap="butt" /><polyline points="626,665 1053,665 1060.2,668" fill="none" stroke="#06a0d6" stroke-width="3" stroke-linejoin="round" stroke-linecap="butt" /><polyline points="626,662.1 1060.2,662.1" fill="none" stroke="#ac58f4" stroke-width="3" stroke-linejoin="round" stroke-linecap="butt" /><polyline points="626,644.4 1053,644.4 1060.2,660" fill="none" stroke="#989cf9" stroke-width="3" stroke-linejoin="round" stroke-linecap="butt" /><polyline points="626,633.2 1053,633.2 1060.2,658" fill="none" stroke="#fbbd85" stroke-width="3" stroke-linejoin="round" stroke-linecap="butt" /><polyline points="626.8,590.9 636.4,589.6 669.2,589.6 680.1,591.5 688.3,590.1 729.2,590.1 740.2,588.7 753.8,590.7 762,588.7 770.2,590.7 781.1,588.7 794.8,590.7 816.6,590.7 824.8,588.7 863,588.7 871.2,590.7 884.9,590.7 893.1,588.7 983.2,588.7 994.1,587.4 1005,589.3 1013.2,588 1021.4,589.3 1029.6,588 1052.8,588 1060.2,592.3" fill="none" stroke="#dfb4f8" stroke-width="3" stroke-linejoin="round" stroke-linecap="butt" /><polyline points="626.8,515 641.8,517.7 663.7,517.7 671.9,519.1 710.1,519.1 716.9,517.7 830.3,517.7 838.5,516.4 863,516.4 876.7,513.7 884.9,515.6 893.1,513.7 914.9,513.7 923.1,516.4 931.3,517.7 938.1,519.9 946.3,518.6 953.1,519.9 998.2,519.9 1005,521 1052.8,521 1060.2,564.2" fill="none" stroke="#3d4fe0" stroke-width="3" stroke-linejoin="round" stroke-linecap="butt" /><line x1="1168.6" y1="500.4" x2="1606.7" y2="500.4" stroke="#e2e8ee" stroke-width="1.2"/><text x="1162" y="504.4" text-anchor="end" font-size="14" fill="#9fb0c2">0.04</text><line x1="1168.6" y1="535.2" x2="1606.7" y2="535.2" stroke="#e2e8ee" stroke-width="1.2"/><text x="1162" y="539.2" text-anchor="end" font-size="14" fill="#9fb0c2">0.03</text><line x1="1168.6" y1="569.9" x2="1606.7" y2="569.9" stroke="#e2e8ee" stroke-width="1.2"/><text x="1162" y="573.9" text-anchor="end" font-size="14" fill="#9fb0c2">0.02</text><line x1="1168.6" y1="604.7" x2="1606.7" y2="604.7" stroke="#e2e8ee" stroke-width="1.2"/><text x="1162" y="608.7" text-anchor="end" font-size="14" fill="#9fb0c2">0.01</text><line x1="1168.6" y1="639.4" x2="1606.7" y2="639.4" stroke="#e2e8ee" stroke-width="1.2"/><text x="1162" y="643.4" text-anchor="end" font-size="14" fill="#9fb0c2">0</text><line x1="1168.6" y1="674.2" x2="1606.7" y2="674.2" stroke="#e2e8ee" stroke-width="1.2"/><text x="1162" y="678.2" text-anchor="end" font-size="14" fill="#9fb0c2">-0.01</text><line x1="1200.8" y1="674.7" x2="1200.8" y2="679.7" stroke="#666" stroke-width="1"/><text transform="translate(1202.4,688.2) rotate(-25)" text-anchor="end" font-size="10.6" fill="#a9b8c8">06:20 PM</text><line x1="1275.3" y1="674.7" x2="1275.3" y2="679.7" stroke="#666" stroke-width="1"/><text transform="translate(1276.9,688.2) rotate(-25)" text-anchor="end" font-size="10.6" fill="#a9b8c8">06:30 PM</text><line x1="1349.7" y1="674.7" x2="1349.7" y2="679.7" stroke="#666" stroke-width="1"/><text transform="translate(1351.3,688.2) rotate(-25)" text-anchor="end" font-size="10.6" fill="#a9b8c8">06:40 PM</text><line x1="1424.2" y1="674.7" x2="1424.2" y2="679.7" stroke="#666" stroke-width="1"/><text transform="translate(1425.8,688.2) rotate(-25)" text-anchor="end" font-size="10.6" fill="#a9b8c8">06:50 PM</text><line x1="1498.6" y1="674.7" x2="1498.6" y2="679.7" stroke="#666" stroke-width="1"/><text transform="translate(1500.2,688.2) rotate(-25)" text-anchor="end" font-size="10.6" fill="#a9b8c8">07:00 PM</text><line x1="1573.1" y1="674.7" x2="1573.1" y2="679.7" stroke="#666" stroke-width="1"/><text transform="translate(1574.7,688.2) rotate(-25)" text-anchor="end" font-size="10.6" fill="#a9b8c8">07:10 PM</text><polyline points="1177.5,639.4 1588,639.4" fill="none" stroke="#b04fe6" stroke-width="3" stroke-linejoin="round" stroke-linecap="butt" /><polyline points="1588,639.4 1596,639.4" fill="none" stroke="#d9b420" stroke-width="3" stroke-linejoin="round" stroke-linecap="butt" /><polyline points="1177.5,636.3 1596,636.3 1604,637.5" fill="none" stroke="#f9c48c" stroke-width="3" stroke-linejoin="round" stroke-linecap="butt" /><polyline points="1177.5,632.2 1595.5,632.2" fill="none" stroke="#7fd6f6" stroke-width="3" stroke-linejoin="round" stroke-linecap="butt" /><polyline points="1177.5,613.2 1185,614.9 1192.5,611.9 1200,611.9 1207.4,611.9 1214.9,613.2 1222.4,614.9 1229.9,611.9 1237.4,611.9 1244.9,613.9 1252.4,611.9 1259.8,611.9 1267.3,613.9 1274.8,611.9 1282.3,611.9 1289.8,614.9 1297.3,612.5 1304.8,611.9 1312.2,613.2 1319.7,613.2 1327.2,614.9 1334.7,611.9 1342.2,611.9 1349.7,611.9 1357.2,613.2 1364.7,614.9 1372.1,611.9 1379.6,611.9 1387.1,613.9 1394.6,611.9 1402.1,611.9 1409.6,613.9 1417.1,611.9 1424.5,611.9 1432,614.9 1439.5,612.5 1447,611.9 1454.5,613.2 1462,613.2 1469.5,614.9 1476.9,611.9 1484.4,611.9 1491.9,611.9 1499.4,613.2 1506.9,614.9 1514.4,611.9 1521.9,611.9 1529.3,613.9 1536.8,611.9 1544.3,611.9 1551.8,613.9 1559.3,611.9 1566.8,611.9 1574.3,613.2 1581.7,613.2 1589.2,606 1596.7,589" fill="none" stroke="#dfb4f8" stroke-width="3" stroke-linejoin="round" stroke-linecap="butt" /><polyline points="1177.5,587.1 1588,587.1 1596,580 1604,584" fill="none" stroke="#3d4fe0" stroke-width="3" stroke-linejoin="round" stroke-linecap="butt" /><polyline points="1176.5,542.7 1259.3,542.7 1265.7,541 1397.4,541 1405.9,539.7 1541.8,539.7 1550.3,538.8 1586.4,538.8 1596.2,550.3 1604.7,503.6" fill="none" stroke="#02a0d4" stroke-width="3" stroke-linejoin="round" stroke-linecap="butt" /><polyline points="1177.5,526.4 1595.5,526.4" fill="none" stroke="#9a9bf7" stroke-width="3" stroke-linejoin="round" stroke-linecap="butt" /></svg>
<div class="abs" style="left:1282.7px;top:186.3px;width:115.4px;height:111.3px;background:#242c37;border-radius:3px;z-index:10"><div class="abs" style="left:2.5px;top:4.3px;width:12px;height:12px;border-radius:50%;background:#8d79e8"></div><div class="lbl" style="left:22.8px;top:4px;font-size:13.3px;color:#eceff2">14</div><div class="abs" style="left:3px;top:21px;width:112px;font-size:11.2px;line-height:14.85px;color:#86bde6;word-break:break-all">metric=sum(kube_po<br>d_container_status_w<br>aiting_reason)<br>namespace=default<br>reason=ImagePullBac<br>kOff</div></div>
<div class="abs" style="left:1381px;top:365.3px;width:56.8px;height:18.5px;background:#84c5b9;z-index:10;color:#fff;font-size:12px;line-height:18.5px;text-align:center">06:49 PM</div>
<svg class="abs" style="left:1400px;top:233px;z-index:11" width="17" height="17" viewBox="0 0 17 17"><path d="M8.5 1.6v13.2M1.6 8.4h13.2" stroke="#fff" stroke-width="3" opacity="0.8"/><path d="M8.5 2.2v12M2.2 8.4h12" stroke="#2b2b2b" stroke-width="1.6"/></svg>
<svg class="abs" style="left:1504px;top:139px" width="20" height="20" viewBox="-0.20 0.00 20 20"><path d="M3.35 9.6A6.55 6.55 0 0 1 14.3 4.9" fill="none" stroke="#8ba2b9" stroke-width="2.3"/><path d="M16.7 2.0V8.2H11.2Z" fill="#8ba2b9"/><path d="M16.45 10.4A6.55 6.55 0 0 1 5.6 15.2" fill="none" stroke="#8ba2b9" stroke-width="2.3"/><path d="M2.7 18.0V11.9H8.0Z" fill="#8ba2b9"/></svg>
<svg class="abs" style="left:1527px;top:143px" width="22" height="22"><circle cx="10.34" cy="10.00" r="6.90" fill="none" stroke="#8ba2b9" stroke-width="2"/><polyline points="10.34,5.60 10.34,10.70 6.94,10.70" fill="none" stroke="#8ba2b9" stroke-width="1.8"/></svg>
<div class="lbl" style="left:1552px;top:145.3px;font-size:17.8px;-webkit-text-stroke:0.55px #0d1823;color:#0d1823;z-index:6">-60m</div>
<div class="abs" style="left:1612.0px;top:141.9px;width:4.4px;height:4.4px;border-radius:50%;background:#8ea4ba"></div><div class="abs" style="left:1612.0px;top:147.8px;width:4.4px;height:4.4px;border-radius:50%;background:#8ea4ba"></div><div class="abs" style="left:1612.0px;top:153.7px;width:4.4px;height:4.4px;border-radius:50%;background:#8ea4ba"></div>
<div class="frame"></div></body></html>
